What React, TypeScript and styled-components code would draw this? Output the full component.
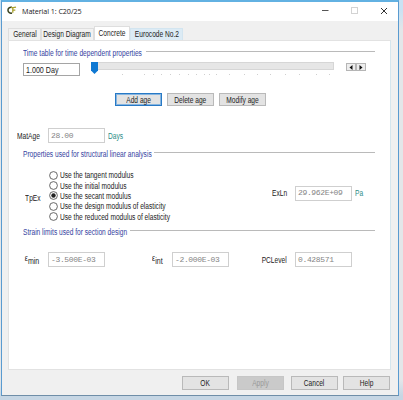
import React from 'react';
import styled, { createGlobalStyle } from 'styled-components';

const FONT = '"Liberation Sans", Arial, sans-serif';

const Global = createGlobalStyle`
  * { box-sizing: border-box; }
  html, body { margin: 0; padding: 0; }
  body {
    width: 403px;
    height: 400px;
    overflow: hidden;
    background: linear-gradient(#c9e2f3 0 10px, #e3e6e9 30px 380px, #c6d6e4 396px);
    font-family: ${FONT};
    font-size: 8.4px;
    line-height: 10px;
    color: #222;
  }
`;

const Dialog = styled.div`
  width: 398px;
  height: 396px;
  margin-left: 1px;
  border: 1px solid #5a9bd0;
  border-top: 2px solid #62b1e2;
  border-bottom-color: #6f8ea8;
  background: #f0f0f0;
  display: flex;
  flex-direction: column;
`;

const TitleBar = styled.header`
  height: 19px;
  flex: none;
  background: #fff;
  display: flex;
  align-items: center;
  padding: 0 10px 2px 5px;
`;

const Title = styled.div`
  flex: 1;
  margin-left: 5px;
  font: 7.2px/10px "Open Sans", sans-serif;
  letter-spacing: -0.08px;
`;

const Controls = styled.div`
  display: flex;
  align-items: center;
  gap: 22px;
`;

/* Condensed interface lettering; origin picks the edge that stays in place. */
const Label = styled.span<{ $color?: string; $origin?: 'left' | 'center' | 'right'; $w?: number; $scale?: number }>`
  display: inline-block;
  width: ${p => (p.$w ? `${p.$w}px` : 'auto')};
  white-space: nowrap;
  transform: scaleX(${p => p.$scale ?? 0.79});
  transform-origin: ${p => p.$origin ?? 'left'} center;
  color: ${p => p.$color ?? '#222'};
`;

const TabBar = styled.nav`
  height: 19px;
  flex: none;
  display: flex;
  align-items: flex-end;
  padding-left: 6px;
`;

const Tab = styled.div<{ $w: number; $active?: boolean; $hot?: boolean }>`
  width: ${p => p.$w}px;
  height: ${p => (p.$active ? 14 : 12)}px;
  padding-top: ${p => (p.$active ? 1 : 0)}px;
  border: 1px solid ${p => (p.$hot ? '#d3e5f0' : '#dedede')};
  border-bottom: 0;
  background: ${p => (p.$active ? '#fff' : p.$hot ? '#dcebf5' : '#f2f2f2')};
  display: flex;
  justify-content: center;
`;

const Panel = styled.main`
  width: 383px;
  height: 330px;
  flex: none;
  margin-left: 6px;
  background: #fff;
  border: 1px solid #e2e2e2;
  border-right-color: #d5e6ee;
`;

const SectionHead = styled.div<{ $top: number }>`
  display: flex;
  align-items: center;
  height: 10px;
  margin: ${p => p.$top}px 15px 0 14px;
`;

const Rule = styled.div`
  flex: 1;
  height: 1px;
  margin-top: -3px;
  background: #bababa;
`;

const Row = styled.div<{ $top: number; $cols: string }>`
  display: grid;
  grid-template-columns: ${p => p.$cols};
  align-items: center;
  height: 15px;
  margin-top: ${p => p.$top}px;
`;

const Field = styled.div<{ $live?: boolean }>`
  width: 57px;
  height: ${p => (p.$live ? 13 : 15)}px;
  border: 1px solid ${p => (p.$live ? '#a5a5a5' : '#cfcfcf')};
  padding-left: 2px;
  display: flex;
  align-items: center;
  white-space: nowrap;
  font-family: ${p => (p.$live ? 'inherit' : '"Liberation Mono", monospace')};
  font-size: ${p => (p.$live ? 8.4 : 8)}px;
  letter-spacing: ${p => (p.$live ? 0 : -0.35)}px;
  color: #858585;
`;

const EndLabel = styled(Label)`
  justify-self: end;
  margin-right: 8px;
`;

const Symbol = styled.div`
  justify-self: end;
  display: flex;
  margin-right: 9px;
  line-height: 8px;
  transform: scaleX(0.84);
  transform-origin: right center;
`;

const Subscript = styled.span`
  padding-top: 3px;
`;

const Slider = styled.svg`
  display: block;
`;

const Spinner = styled.div`
  display: flex;
  width: 20px;
  height: 8px;
  margin-top: -5px;
`;

const SpinButton = styled.div`
  flex: 1;
  border: 1px solid #b5b5b5;
  background: #ededed;
  display: flex;
  align-items: center;
  justify-content: center;
`;

const ButtonRow = styled.div<{ $top: number; $left: number }>`
  display: flex;
  gap: 5px;
  margin: ${p => p.$top}px 0 0 ${p => p.$left}px;
`;

const BUTTON_EDGE = { focus: '#2879c5', off: '#c6c6c6', normal: '#b9b9b9' };

const ButtonFace = styled.button<{ $look: 'focus' | 'off' | 'normal'; $h: number }>`
  appearance: none;
  width: 47px;
  height: ${p => p.$h}px;
  padding: 0;
  display: flex;
  align-items: center;
  justify-content: center;
  border: 1px solid ${p => BUTTON_EDGE[p.$look]};
  box-shadow: ${p => (p.$look === 'focus' ? 'inset 0 0 0 1px #86b5e0' : 'none')};
  background: ${p => (p.$look === 'off' ? '#cacaca' : '#e3e3e3')};
  font: 8.4px/10px ${FONT};
`;

const Footer = styled.footer`
  display: grid;
  grid-template-columns: 55px 54px 52px 47px;
  margin: 6px 0 0 180px;
`;

const RadioArea = styled.div`
  display: grid;
  grid-template-columns: 40px 206px 40px 60px auto;
  align-items: center;
  height: 52px;
  margin-top: 11px;
`;

const RadioList = styled.div`
  display: flex;
  flex-direction: column;
`;

const RadioItem = styled.div`
  display: flex;
  align-items: center;
  height: 10.4px;
  gap: 1.5px;
`;

const RadioMark = styled.svg`
  flex: none;
`;

const TypeLabel = styled(EndLabel)`
  padding-top: 4px;
`;

/* The linear modulus row is aligned slightly above the middle radio. */
const Raised = styled.div<{ $end?: boolean }>`
  display: flex;
  justify-content: ${p => (p.$end ? 'flex-end' : 'flex-start')};
  padding-bottom: 6px;
`;

const BLUE = '#3442a0';
const TEAL = '#2b8c86';
const TICKS = [31, 53, 62, 70, 79, 88, 97, 105, 113, 118, 125, 138, 153, 166, 179, 194, 208, 225, 238];

const RADIOS = [
  'Use the tangent modulus',
  'Use the initial modulus',
  'Use the secant modulus',
  'Use the design modulus of elasticity',
  'Use the reduced modulus of elasticity',
];

function Section({ title, top, w }: { title: string; top: number; w: number }) {
  return (
    <SectionHead $top={top}>
      <Label $color={BLUE} $w={w}><TitleText>{title}</TitleText></Label>
      <Rule />
    </SectionHead>
  );
}

const TitleText = styled.span`
  white-space: nowrap;
`;

function Epsilon({ sub }: { sub: string }) {
  return (
    <Symbol>
      <span>ε</span>
      <Subscript>{sub}</Subscript>
    </Symbol>
  );
}

function Button({ text, look = 'normal', h = 13 }: { text: string; look?: 'focus' | 'off' | 'normal'; h?: number }) {
  return (
    <ButtonFace $look={look} $h={h} disabled={look === 'off'}>
      <Label $origin="center" $color={look === 'off' ? '#999' : '#222'}>{text}</Label>
    </ButtonFace>
  );
}

export default function App() {
  return (
    <>
      <Global />
      <Dialog>
        <TitleBar>
          <svg width="10" height="9" viewBox="0 0 10 9" fill="none">
            <path d="M4.8 1.3A3 3 0 1 0 5 7" stroke="#39431f" strokeWidth="1.5" />
            <path d="M4 1.3Q6 2 9 1.2M5.8 2v4.8M5.8 4.2h2.500" stroke="#a9a02c" strokeWidth="1.3" />
          </svg>
          <Title>Material 1: C20/25</Title>
          <Controls>
            <svg width="7" height="7"><path d="M0 3.5h6.500" stroke="#555" strokeWidth="1" /></svg>
            <svg width="7" height="7"><rect x=".5" y=".5" width="6" height="6" fill="none" stroke="#d3d3d3" /></svg>
            <svg width="8" height="8"><path d="M1 1l6 6M7 1l-6 6" stroke="#333" strokeWidth="1" /></svg>
          </Controls>
        </TitleBar>
        <TabBar>
          <Tab $w={33}><Label $origin="center">General</Label></Tab>
          <Tab $w={53}><Label $origin="center">Design Diagram</Label></Tab>
          <Tab $w={36} $active><Label $origin="center">Concrete</Label></Tab>
          <Tab $w={53} $hot><Label $origin="center">Eurocode No.2</Label></Tab>
        </TabBar>
        <Panel>
          <Section title="Time table for time dependent properties" top={7} w={123} />
          <Row $top={4} $cols="14px 68px 255px auto">
            <span />
            <Field $live><Label $scale={0.85}>1.000 Day</Label></Field>
            <Slider width="244" height="15">
              <rect x="0.5" y="0.5" width="242" height="7" fill="#e6e6e6" stroke="#d6d6d6" />
              <path d="M0 0h7v8.500L3.500 12 0 8.500z" fill="#0f78d2" />
              {TICKS.map(x => <rect key={x} x={x} y="12" width="1" height="1" fill="#cfcfcf" />)}
            </Slider>
            <Spinner>
              <SpinButton><svg width="4" height="5"><path d="M3.500 0v5L.5 2.500z" fill="#111" /></svg></SpinButton>
              <SpinButton><svg width="4" height="5"><path d="M.5 0v5l3-2.500z" fill="#111" /></svg></SpinButton>
            </Spinner>
          </Row>
          <ButtonRow $top={16} $left={106}>
            <Button text="Add age" look="focus" />
            <Button text="Delete age" />
            <Button text="Modify age" />
          </ButtonRow>
          <Row $top={22} $cols="39px 60px auto">
            <EndLabel $origin="right">MatAge</EndLabel>
            <Field>28.00</Field>
            <Label $color={TEAL}>Days</Label>
          </Row>
          <Section title="Properties used for structural linear analysis" top={6} w={131} />
          <RadioArea>
            <TypeLabel $origin="right">TpEx</TypeLabel>
            <RadioList>
              {RADIOS.map((text, i) => (
                <RadioItem key={text}>
                  <RadioMark width="9" height="9">
                    <circle cx="4.500" cy="4.500" r="3.900" fill="#fff" stroke="#444" strokeWidth="0.8" />
                    {i === 2 && <circle cx="4.500" cy="4.500" r="2.200" fill="#222" />}
                  </RadioMark>
                  <Label>{text}</Label>
                </RadioItem>
              ))}
            </RadioList>
            <Raised $end><EndLabel $origin="right">ExLn</EndLabel></Raised>
            <Raised><Field>29.962E+09</Field></Raised>
            <Raised><Label $color={TEAL}>Pa</Label></Raised>
          </RadioArea>
          <Section title="Strain limits used for section design" top={5} w={107} />
          <Row $top={15} $cols="39px 57px 67px 57px 66px 57px">
            <Epsilon sub="min" />
            <Field>-3.500E-03</Field>
            <Epsilon sub="int" />
            <Field>-2.000E-03</Field>
            <EndLabel $origin="right">PCLevel</EndLabel>
            <Field>0.428571</Field>
          </Row>
        </Panel>
        <Footer>
          <Button text="OK" h={14} />
          <Button text="Apply" h={14} look="off" />
          <Button text="Cancel" h={14} />
          <Button text="Help" h={14} />
        </Footer>
      </Dialog>
    </>
  );
}
